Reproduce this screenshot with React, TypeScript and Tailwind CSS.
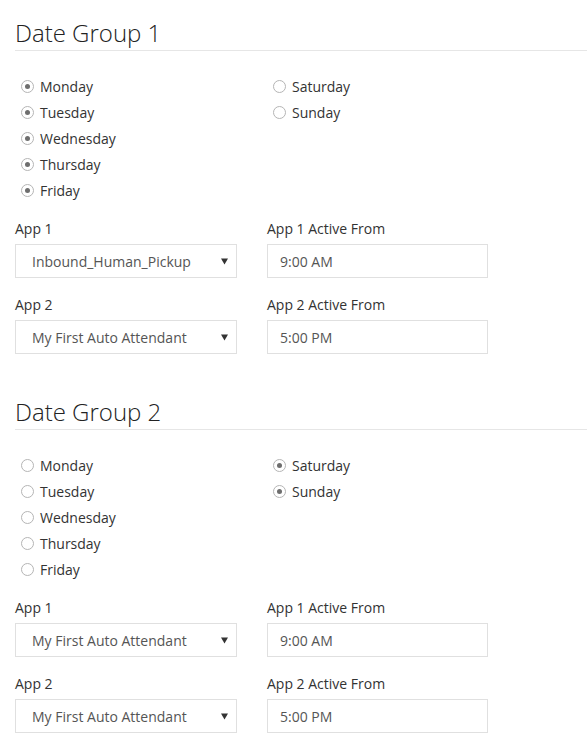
import React from "react";

const DAYS_LEFT = ["Monday", "Tuesday", "Wednesday", "Thursday", "Friday"];
const DAYS_RIGHT = ["Saturday", "Sunday"];

type Group = {
  title: string;
  checked: string[];
  app1: string;
  app2: string;
  from1: string;
  from2: string;
};

const groups: Group[] = [
  {
    title: "Date Group 1",
    checked: ["Monday", "Tuesday", "Wednesday", "Thursday", "Friday"],
    app1: "Inbound_Human_Pickup",
    app2: "My First Auto Attendant",
    from1: "9:00 AM",
    from2: "5:00 PM",
  },
  {
    title: "Date Group 2",
    checked: ["Saturday", "Sunday"],
    app1: "My First Auto Attendant",
    app2: "My First Auto Attendant",
    from1: "9:00 AM",
    from2: "5:00 PM",
  },
];

function Radio({ label, on }: { label: string; on: boolean }) {
  return (
    <div className="flex items-center h-[26px]">
      <span className="ml-[6px] mr-[6px] w-[13px] h-[13px] rounded-full border border-[#b5b5b5] bg-white flex items-center justify-center">
        {on && <span className="w-[5px] h-[5px] rounded-full bg-[#6e6e6e]" />}
      </span>
      <span>{label}</span>
    </div>
  );
}

function Select({ value }: { value: string }) {
  return (
    <div className="w-[222px] h-[34px] border border-[#e0e0e0] bg-white flex items-center pl-[16px] pr-[8px] text-[#555]">
      <span className="flex-1">{value}</span>
      <svg width="7" height="7" viewBox="0 0 7 7">
        <path d="M0 0.5 H7 L3.5 6.5 Z" fill="#333" />
      </svg>
    </div>
  );
}

function TextInput({ value }: { value: string }) {
  return (
    <div className="w-[221px] h-[34px] border border-[#e0e0e0] bg-white flex items-center pl-[12px] text-[#555]">
      {value}
    </div>
  );
}

function Field({ label, children }: { label: string; children: React.ReactNode }) {
  return (
    <div className="flex flex-col">
      <div className="h-[20px] leading-[20px] mb-[5px]">{label}</div>
      {children}
    </div>
  );
}

function DateGroup({ g }: { g: Group }) {
  return (
    <section className="pt-[15px]">
      <h2 className="h-[36px] leading-[35px] text-[24px] font-light text-[#222] border-b border-[#e6e6e6]">
        {g.title}
      </h2>
      <div className="grid grid-cols-[252px_1fr] mt-[22px]">
        <div>
          {DAYS_LEFT.map((d) => (
            <Radio key={d} label={d} on={g.checked.includes(d)} />
          ))}
        </div>
        <div>
          {DAYS_RIGHT.map((d) => (
            <Radio key={d} label={d} on={g.checked.includes(d)} />
          ))}
        </div>
      </div>
      <div className="grid grid-cols-[252px_1fr] mt-[16px] gap-y-[17px]">
        <Field label="App 1">
          <Select value={g.app1} />
        </Field>
        <Field label="App 1 Active From">
          <TextInput value={g.from1} />
        </Field>
        <Field label="App 2">
          <Select value={g.app2} />
        </Field>
        <Field label="App 2 Active From">
          <TextInput value={g.from2} />
        </Field>
      </div>
    </section>
  );
}

export default function App() {
  return (
    <div
      className="bg-white min-h-screen pl-[15px] text-[14px] text-[#333]"
      style={{ fontFamily: '"Open Sans", "Noto Sans", sans-serif' }}
    >
      {groups.map((g, i) => (
        <div key={g.title} className={i > 0 ? "mt-[25px]" : ""}>
          <DateGroup g={g} />
        </div>
      ))}
    </div>
  );
}
